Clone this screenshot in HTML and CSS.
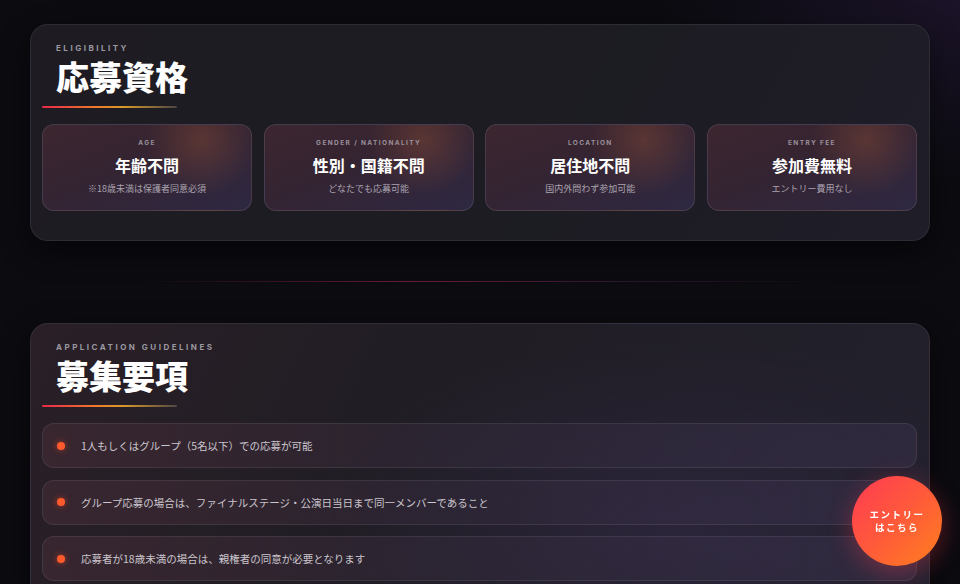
FILE: index.html
```html
<!DOCTYPE html>
<html lang="ja">
<head>
<meta charset="utf-8">
<link rel="stylesheet" href="styles.css">
</head>
<body>
<main class="page">
  <section class="panel panel-eligibility">
    <header class="panel-head">
      <p class="eyebrow">ELIGIBILITY</p>
      <h2 class="title">応募資格</h2>
    </header>
    <div class="title-line"></div>
    <div class="tiles">
      <div class="tile">
        <p class="tile-label">AGE</p>
        <p class="tile-title">年齢不問</p>
        <p class="tile-sub">※18歳未満は保護者同意必須</p>
      </div>
      <div class="tile">
        <p class="tile-label">GENDER / NATIONALITY</p>
        <p class="tile-title">性別・国籍不問</p>
        <p class="tile-sub">どなたでも応募可能</p>
      </div>
      <div class="tile">
        <p class="tile-label">LOCATION</p>
        <p class="tile-title">居住地不問</p>
        <p class="tile-sub">国内外問わず参加可能</p>
      </div>
      <div class="tile">
        <p class="tile-label">ENTRY FEE</p>
        <p class="tile-title">参加費無料</p>
        <p class="tile-sub">エントリー費用なし</p>
      </div>
    </div>
  </section>

  <div class="divider"></div>

  <section class="panel panel-guide">
    <header class="panel-head">
      <p class="eyebrow">APPLICATION GUIDELINES</p>
      <h2 class="title">募集要項</h2>
    </header>
    <div class="title-line"></div>
    <ul class="rules">
      <li class="rule"><span class="dot"></span><span>1人もしくはグループ（5名以下）での応募が可能</span></li>
      <li class="rule"><span class="dot"></span><span>グループ応募の場合は、ファイナルステージ・公演日当日まで同一メンバーであること</span></li>
      <li class="rule"><span class="dot"></span><span>応募者が18歳未満の場合は、親権者の同意が必要となります</span></li>
    </ul>
  </section>
</main>

<a class="entry-btn" href="#"><span>エントリー<br>はこちら</span></a>
</body>
</html>
```

FILE: styles.css
```css
* { box-sizing: border-box; }

html, body {
  margin: 0;
  height: 100%;
}

body {
  background:
    radial-gradient(ellipse 420px 260px at 100% 0%, rgba(40, 26, 60, 0.55), transparent 70%),
    #0b0b10;
  color: #fff;
  font-family: "Noto Sans CJK JP", "Noto Sans", sans-serif;
  overflow: hidden;
}

.page {
  width: 900px;
  margin: 0 auto;
  padding-top: 24px;
}

.panel {
  position: relative;
  border-radius: 18px;
  border: 1px solid rgba(255, 255, 255, 0.07);
  background: linear-gradient(120deg, #1e1c22 0%, #1c1c22 50%, #1f1d28 100%);
  box-shadow: 0 10px 30px rgba(0, 0, 0, 0.45);
  padding: 17px 12px 29px 11px;
}

.panel-guide {
  background:
    radial-gradient(ellipse 520px 260px at 72% 70%, rgba(60, 48, 90, 0.35), transparent 70%),
    linear-gradient(115deg, #2a1f27 0%, #201d24 40%, #22202c 100%);
}

.panel-head {
  padding-left: 14px;
}

.eyebrow {
  margin: 0;
  font-family: "Inter", "Lato", sans-serif;
  font-weight: 700;
  font-size: 8px;
  line-height: 12px;
  letter-spacing: 2.5px;
  color: #9a98a1;
}

.title {
  margin: 2px 0 0;
  font-family: "Noto Sans CJK JP", sans-serif;
  font-weight: 900;
  font-size: 33px;
  line-height: 40px;
  letter-spacing: 0;
  color: #ffffff;
}

.title-line {
  width: 135px;
  height: 2px;
  margin-top: 10px;
  border-radius: 1px;
  background: linear-gradient(90deg, #e8284a 0%, #f07a2a 40%, #d99a2a 60%, rgba(120, 110, 100, 0.5) 100%);
}

.tiles {
  display: grid;
  grid-template-columns: repeat(4, 1fr);
  gap: 11.5px;
  margin-top: 16px;
}

.tile {
  height: 87px;
  border-radius: 12px;
  border: 1px solid rgba(255, 255, 255, 0.1);
  background:
    radial-gradient(circle 55px at 76% 18%, rgba(160, 85, 55, 0.35), transparent 100%),
    linear-gradient(160deg, #3c2630 0%, #352431 40%, #2e2842 100%);
  text-align: center;
  padding-top: 13px;
}

.tile-label {
  margin: 0;
  font-family: "Inter", "Lato", sans-serif;
  font-weight: 700;
  font-size: 6.5px;
  line-height: 11px;
  letter-spacing: 1.4px;
  color: #9a909c;
}

.tile-title {
  margin: 5px 0 0;
  font-weight: 700;
  font-size: 16px;
  line-height: 22px;
  color: #fff;
}

.tile-sub {
  margin: 6px 0 0;
  font-size: 9px;
  line-height: 13px;
  color: #aaa3ae;
}

.divider {
  height: 1px;
  margin: 40px 0 41px;
  background: linear-gradient(90deg, transparent 12%, rgba(130, 30, 70, 0.5) 32%, rgba(170, 40, 80, 0.6) 42%, rgba(100, 40, 100, 0.4) 65%, transparent 90%);
}

.rules {
  list-style: none;
  margin: 16px 0 0;
  padding: 0;
  display: flex;
  flex-direction: column;
  gap: 11.5px;
}

.rule {
  height: 45px;
  display: flex;
  align-items: center;
  gap: 16px;
  padding-left: 14px;
  border-radius: 12px;
  border: 1px solid rgba(255, 255, 255, 0.08);
  background: linear-gradient(90deg, rgba(70, 45, 55, 0.55) 0%, rgba(55, 45, 65, 0.4) 50%, rgba(60, 52, 80, 0.45) 100%);
  font-size: 10.5px;
  color: #cbc5cd;
}

.dot {
  width: 8px;
  height: 8px;
  border-radius: 50%;
  background: #ff5a2c;
  box-shadow: 0 0 6px rgba(255, 80, 40, 0.6);
  flex: none;
}

.entry-btn {
  position: fixed;
  right: 18px;
  bottom: 18px;
  width: 90px;
  height: 90px;
  border-radius: 50%;
  background: linear-gradient(135deg, #ff3a52 0%, #ff5a3a 50%, #ff7f1e 100%);
  box-shadow: 0 6px 24px rgba(255, 60, 80, 0.35);
  display: flex;
  align-items: center;
  justify-content: center;
  text-align: center;
  text-decoration: none;
  color: #fff;
  font-weight: 700;
  font-size: 9.5px;
  line-height: 13px;
  letter-spacing: 1.5px;
}
```
